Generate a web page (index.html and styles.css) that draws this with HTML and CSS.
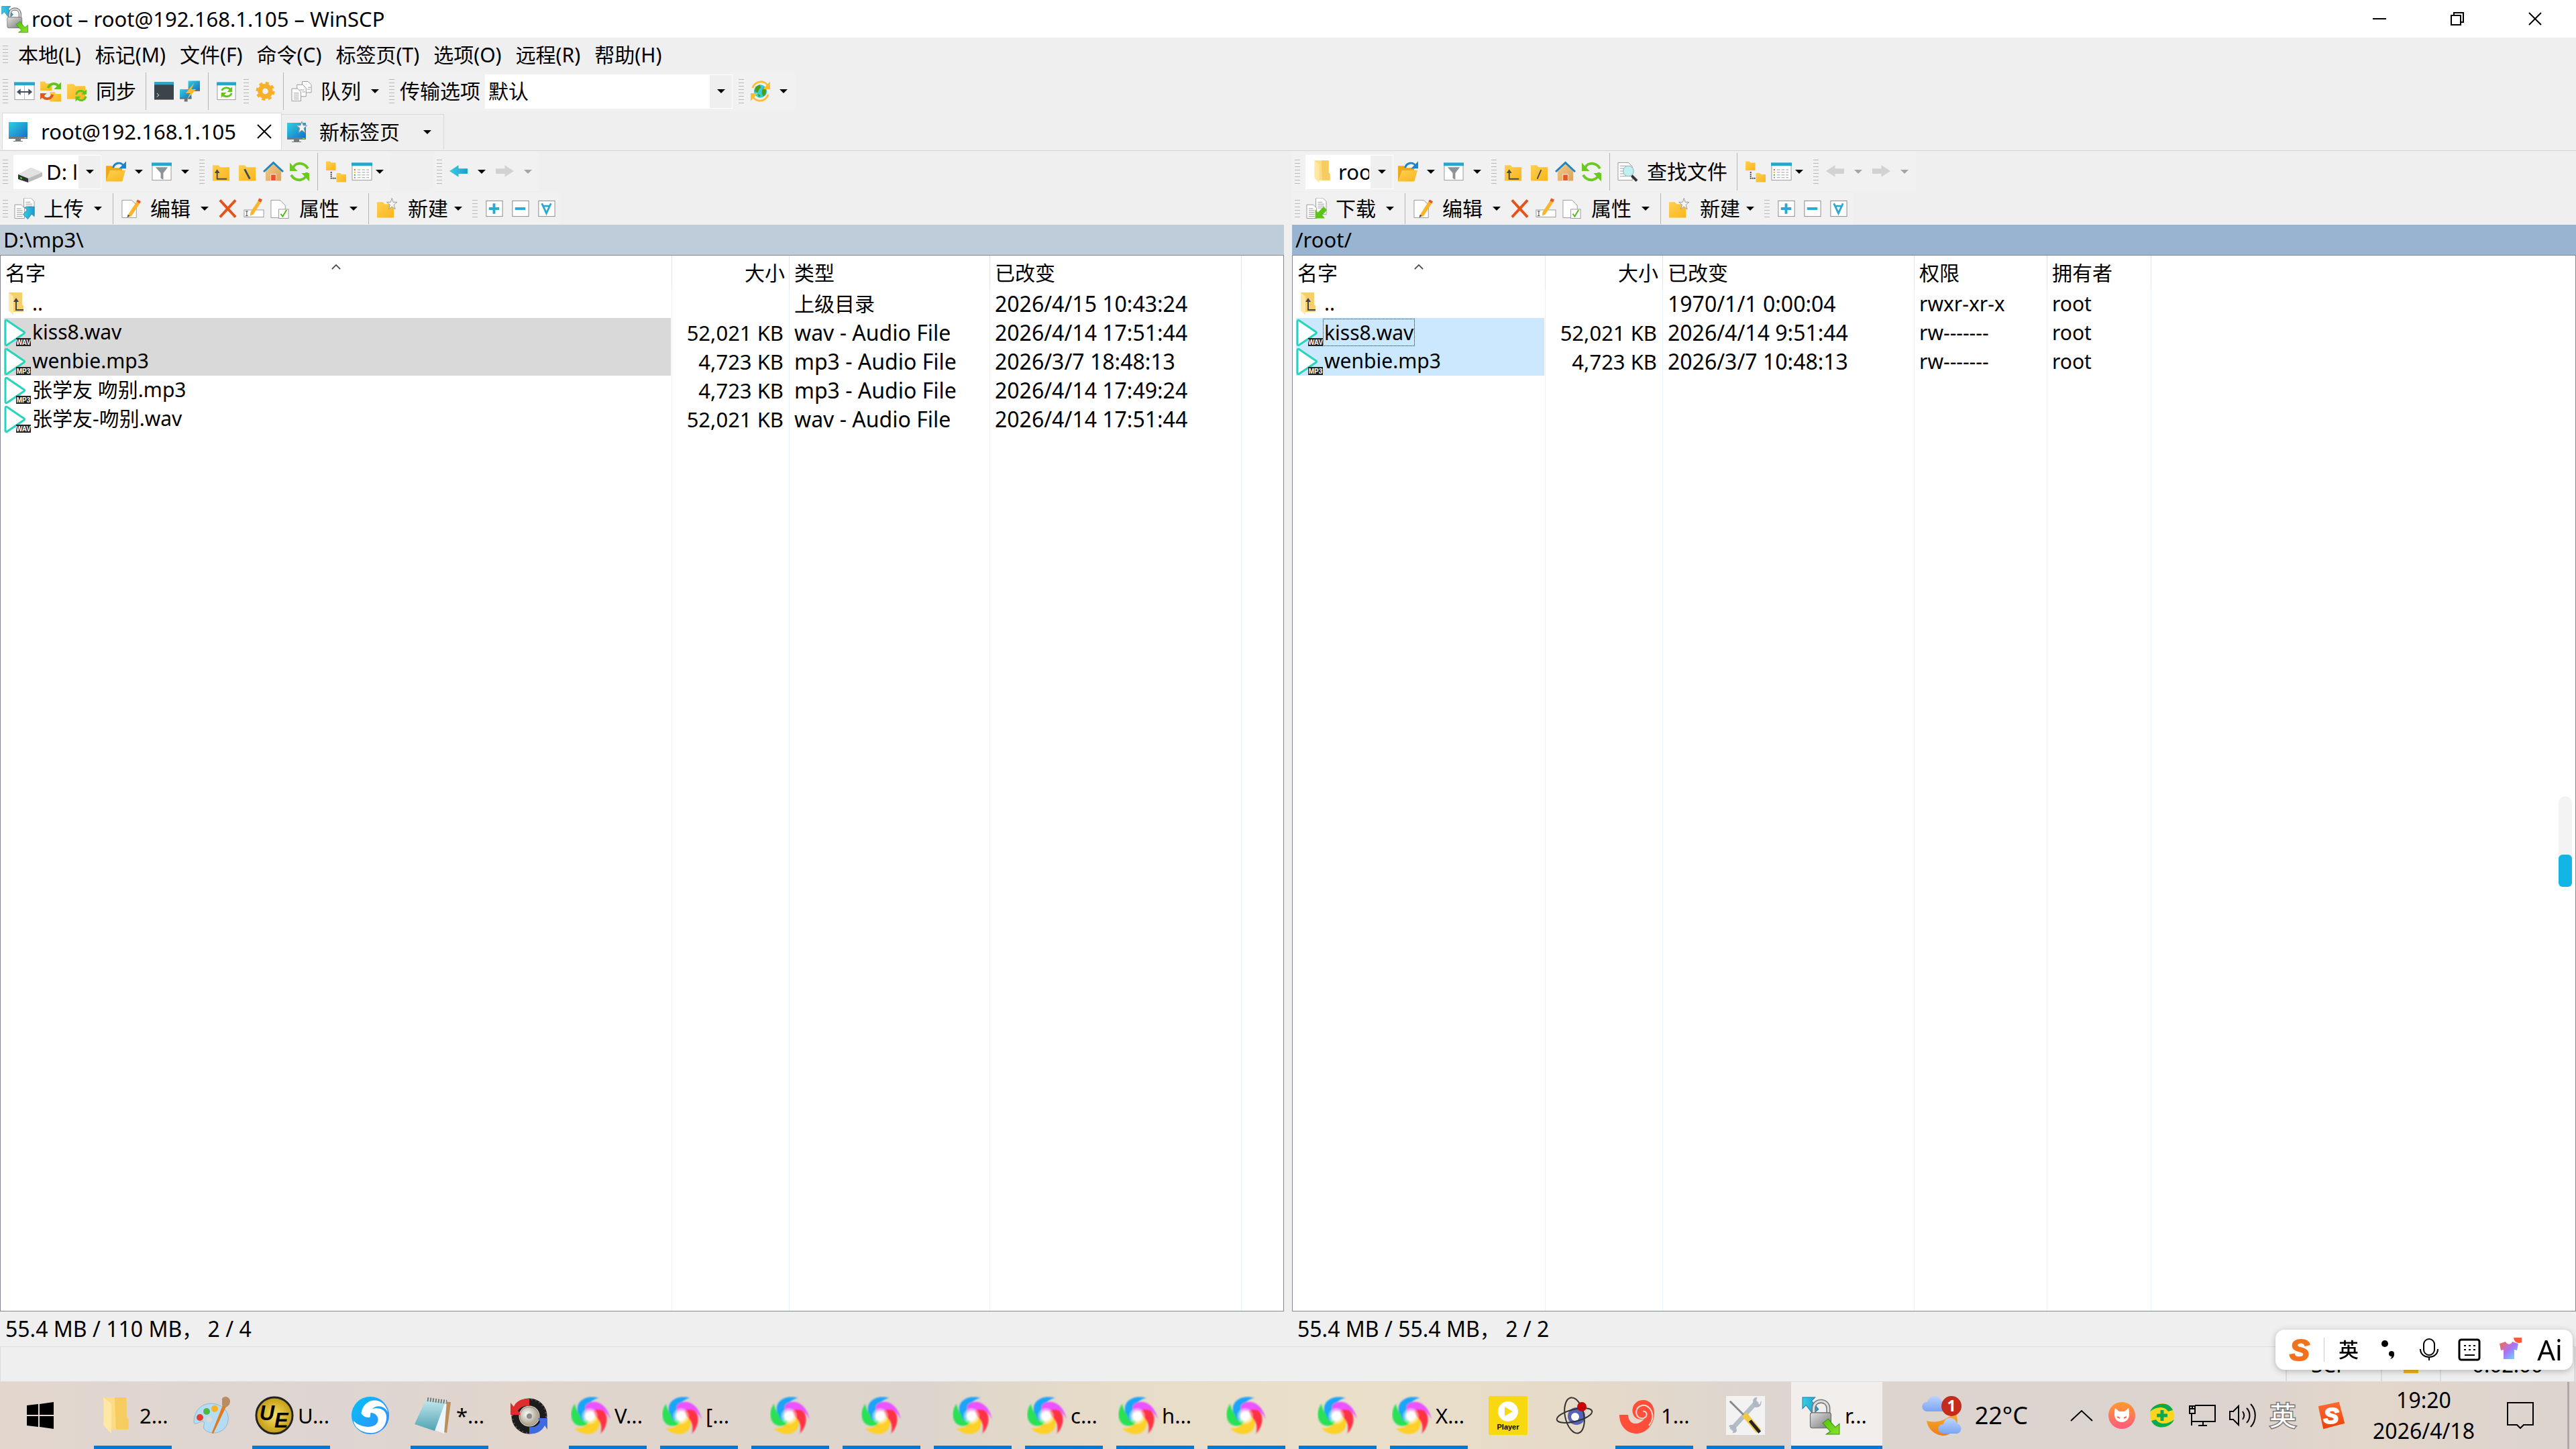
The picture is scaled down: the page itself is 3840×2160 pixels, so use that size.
FILE: index.html
```html
<!DOCTYPE html>
<html lang="zh-CN">
<head>
    <meta charset="UTF-8">
    <meta name="viewport" content="width=device-width, initial-scale=1.0">
    <title>root – root@192.168.1.105 – WinSCP</title>
    <link rel="stylesheet" href="styles.css">
</head>
<body>
    <!-- icon sprite -->
    <svg class="sprite" aria-hidden="true">
        <defs>
            <linearGradient id="gFolder" x1="0" y1="0" x2="1" y2="1"><stop offset="0" stop-color="#ffcf52"/><stop offset="1" stop-color="#f9b61a"/></linearGradient>
            <linearGradient id="gBlue" x1="0" y1="0" x2="1" y2="1"><stop offset="0" stop-color="#2fd0e0"/><stop offset="1" stop-color="#1470c8"/></linearGradient>
            <linearGradient id="gTeal" x1="0" y1="0" x2="1" y2="0"><stop offset="0" stop-color="#36cfe0"/><stop offset="1" stop-color="#219bd0"/></linearGradient>
            <linearGradient id="gGreen" x1="0" y1="0" x2="1" y2="1"><stop offset="0" stop-color="#4fc40c"/><stop offset="1" stop-color="#8be32a"/></linearGradient>
            <linearGradient id="gLock" x1="0" y1="0" x2="1" y2="1"><stop offset="0" stop-color="#e2e2e2"/><stop offset="1" stop-color="#777"/></linearGradient>
            <linearGradient id="gHouse" x1="0" y1="0" x2="1" y2="1"><stop offset="0" stop-color="#f3c98c"/><stop offset="1" stop-color="#d9a45c"/></linearGradient>
            <linearGradient id="gSwirlBlue" x1="0" y1="0" x2="1" y2="1"><stop offset="0" stop-color="#00c3f5"/><stop offset="1" stop-color="#3d86ff"/></linearGradient>
            <linearGradient id="gPad" x1="0" y1="0" x2="0" y2="1"><stop offset="0" stop-color="#c4e8ee"/><stop offset="1" stop-color="#4fa3b4"/></linearGradient>
            <linearGradient id="gCat" x1="0" y1="0" x2="0" y2="1"><stop offset="0" stop-color="#ff9a2b"/><stop offset="1" stop-color="#ff5a80"/></linearGradient>
            <linearGradient id="gShirt" x1="0" y1="0" x2="1" y2="1"><stop offset="0" stop-color="#ff6a3d"/><stop offset="0.5" stop-color="#a575ff"/><stop offset="1" stop-color="#5ff0ff"/></linearGradient>
            <linearGradient id="gMoon" x1="0" y1="0" x2="0" y2="1"><stop offset="0" stop-color="#f5b32c"/><stop offset="1" stop-color="#ee7d18"/></linearGradient>
            <linearGradient id="gCloud" x1="0" y1="0" x2="0" y2="1"><stop offset="0" stop-color="#bdd4ff"/><stop offset="1" stop-color="#7aa4f2"/></linearGradient>
            <linearGradient id="gSogou" x1="0" y1="0" x2="0" y2="1"><stop offset="0" stop-color="#ff6a33"/><stop offset="1" stop-color="#ec4308"/></linearGradient>
            <radialGradient id="gGold"><stop offset="0" stop-color="#f6e163"/><stop offset="1" stop-color="#c39a12"/></radialGradient>
            <radialGradient id="gWhite"><stop offset="0.4" stop-color="#fff"/><stop offset="1" stop-color="#fff" stop-opacity="0"/></radialGradient>
            <radialGradient id="gHub" cx="0.4" cy="0.4"><stop offset="0" stop-color="#fff"/><stop offset="1" stop-color="#b3ab98"/></radialGradient>
            <filter id="soft"><feGaussianBlur stdDeviation="1"/></filter>
        </defs>

        <symbol id="i-winscp" viewBox="0 0 56 56">
            <path d="M1 2h18l-5 5 10 12-8 7L6 13 1 18z" fill="url(#gTeal)" stroke="#1a7fb4" stroke-width="1"/>
            <path d="M17 26v-8c0-14 21-14 21 0v8" fill="none" stroke="#777" stroke-width="6"/>
            <path d="M17 26v-8c0-14 21-14 21 0v8" fill="none" stroke="#ddd" stroke-width="3"/>
            <rect x="12" y="24" width="30" height="22" rx="3" fill="url(#gLock)" stroke="#666"/>
            <path d="M30 39l8-6 10 12 6-5v15H35l6-4z" fill="url(#gGreen)" stroke="#3b8f10"/>
        </symbol>
        <symbol id="i-compare" viewBox="0 0 32 32">
            <rect x="1" y="3" width="30" height="26" fill="#fff" stroke="#999"/><path d="M0 2h32v5H0z" fill="#22a7cf"/>
            <path d="M16 7v22" stroke="#bbb"/><path d="M4 17l6-5v4h12v-4l6 5-6 5v-4H10v4z" fill="#46505a"/>
        </symbol>
        <symbol id="i-sync" viewBox="0 0 32 32">
            <path d="M0 1h7l2 3h9v11H0z" fill="url(#gFolder)"/><path d="M15 17h7l2 3h8v12H15z" fill="url(#gFolder)"/>
            <path d="M12 11c3-8 13-9 17-1" fill="none" stroke="#5fc41b" stroke-width="4"/><path d="M32 2v11H21z" fill="#5fc41b"/>
            <path d="M19 21c-3 8-12 9-16 1" fill="none" stroke="#e2571d" stroke-width="4"/><path d="M0 29V19h10z" fill="#e2571d"/>
        </symbol>
        <symbol id="i-foldersync" viewBox="0 0 32 32">
            <path d="M1 5h10l3 3h15v20H1z" fill="url(#gFolder)"/>
            <path d="M15 21c2-7 10-7 13-2M30 24c-2 7-10 8-14 2" fill="none" stroke="#5fc41b" stroke-width="3"/>
            <path d="M31 13v8h-8zM14 32v-8h8z" fill="#5fc41b"/>
        </symbol>
        <symbol id="i-terminal" viewBox="0 0 32 32"><path d="M1 2h30v27H1z" fill="#3c444b"/><path d="M1 2h30v4H1z" fill="#22a7cf"/><path d="M5 19l3 3-3 3" fill="none" stroke="#fff" stroke-width="1"/></symbol>
        <symbol id="i-putty" viewBox="0 0 32 32">
            <path d="M13 0h18v14H13z" fill="url(#gBlue)"/><path d="M0 13h18v14H0z" fill="url(#gBlue)"/>
            <path d="M13 14h18v2H13zM0 26h18v2H0zM7 28h5v4H7z" fill="#6b757c"/><path d="M22 3L9 19h7l-5 10 14-16h-7z" fill="#fdb92c"/>
        </symbol>
        <symbol id="i-refreshwin" viewBox="0 0 32 32">
            <rect x="2" y="3" width="28" height="26" fill="#fff" stroke="#999"/><path d="M1 2h30v5H1z" fill="#22a7cf"/>
            <path d="M9 15c2-5 10-6 14-1M24 19c-2 6-11 7-15 1" fill="none" stroke="#5fc41b" stroke-width="3"/><path d="M25 9v8h-8zM8 26v-8h8z" fill="#5fc41b"/>
        </symbol>
        <symbol id="i-gear" viewBox="0 0 32 32">
            <circle cx="16" cy="16" r="8" fill="none" stroke="#f7b02c" stroke-width="7"/>
            <circle cx="16" cy="16" r="12" fill="none" stroke="#f7b02c" stroke-width="5" stroke-dasharray="5 4.4"/>
        </symbol>
        <symbol id="i-queue" viewBox="0 0 32 32">
            <g fill="#fff" stroke="#999"><path d="M17 1h9l5 5v12H17z"/><path d="M9 6h9l5 5v13H9z"/><path d="M1 12h9l5 5v14H1z"/><path d="M4 19h8M4 22h8M4 25h8M4 28h8M13 14h7M17 17h5M26 10h4M25 13h4"/></g>
        </symbol>
        <symbol id="i-globe" viewBox="0 0 32 32">
            <circle cx="16" cy="16" r="10" fill="#36cdd9"/><path d="M9 9l6-3 2 4-3 3-2 5-5-2zM20 10l5 4-1 7-4 3-2-6zM12 20l4 2-2 4z" fill="#4b9e1c"/>
            <path d="M4 11C8-1 24-2 28 9M28 21c-4 12-20 13-24 2" fill="none" stroke="#fbbd32" stroke-width="3"/><path d="M31 1v12H20zM1 31V19h11z" fill="#fbbd32"/>
        </symbol>
        <symbol id="i-monitor" viewBox="0 0 32 32"><path d="M2 2h28v23H2z" fill="url(#gBlue)"/><path d="M2 24h28v3H2zM12 27h8v3h-8zM9 30h14v1H9z" fill="#737b80"/><path d="M25 25h3v1h-3z" fill="#7f3"/></symbol>
        <symbol id="i-newtab" viewBox="0 0 32 32"><use href="#i-monitor"/><path d="M24 0l2 6 6 0-5 4 2 7-5-4-5 4 2-7-5-4h6z" fill="#f4f4f4" stroke="#999"/></symbol>
        <symbol id="i-drive" viewBox="0 0 36 32"><path d="M0 20l19-10 17 7v6L15 32 0 27z" fill="#bbb"/><path d="M0 20l19-10 17 7-21 9z" fill="#e2e2e2"/><path d="M0 20l15 6v6L0 27z" fill="#333"/><path d="M3 24l3 1v2l-3-1z" fill="#4e3"/></symbol>
        <symbol id="i-open" viewBox="0 0 32 32">
            <path d="M1 7h9l3 3h13v20H1z" fill="#eda81c"/><path d="M7 14h24l-5 17H1z" fill="url(#gFolder)"/><path d="M12 10c2-8 12-10 16-3" fill="none" stroke="#1b86c7" stroke-width="3"/><path d="M32 0v11H21z" fill="#1b86c7"/>
        </symbol>
        <symbol id="i-filter" viewBox="0 0 32 32"><rect x="1" y="3" width="29" height="26" fill="#fff" stroke="#999"/><path d="M0 2h31v5H0z" fill="#22a7cf"/><path d="M6 9h19l-7 9v10l-4-2v-8z" fill="#8d9499"/></symbol>
        <symbol id="i-up" viewBox="0 0 32 32"><path d="M3 6h9l3 3h14v21H3z" fill="url(#gFolder)"/><path d="M10 15v12h15" fill="none" stroke="#4a4a4a" stroke-width="2"/><path d="M6 18l4-6 4 6z" fill="#4a4a4a"/></symbol>
        <symbol id="i-rootl" viewBox="0 0 32 32"><path d="M3 6h9l3 3h14v21H3z" fill="url(#gFolder)"/><path d="M12 12l8 15" stroke="#4a4a4a" stroke-width="3"/></symbol>
        <symbol id="i-rootr" viewBox="0 0 32 32"><path d="M3 6h9l3 3h14v21H3z" fill="url(#gFolder)"/><path d="M19 13l-6 14" stroke="#4a4a4a" stroke-width="2"/></symbol>
        <symbol id="i-home" viewBox="0 0 32 32"><path d="M16 3l12 12v15H4V15z" fill="url(#gHouse)"/><path d="M12 20h8v10h-8z" fill="#e4572e" stroke="#fff"/><path d="M1 16L16 2l15 14" fill="none" stroke="#1b86c7" stroke-width="3"/></symbol>
        <symbol id="i-refresh" viewBox="0 0 32 32"><path d="M6 14C5 2 22-1 29 11M27 17c0 13-16 16-24 4" fill="none" stroke="#6cc921" stroke-width="4"/><path d="M1 2v13h12zM31 31V18H19z" fill="#6cc921"/></symbol>
        <symbol id="i-tree" viewBox="0 0 32 32"><path d="M1 0h6l2 2h7v12H1z" fill="url(#gFolder)"/><path d="M17 18h6l2 2h7v12H17z" fill="url(#gFolder)"/><path d="M9 16v10h7" fill="none" stroke="#444" stroke-width="2" stroke-dasharray="2 1"/></symbol>
        <symbol id="i-list" viewBox="0 0 32 32"><rect x="1" y="3" width="30" height="26" fill="#fff" stroke="#999"/><path d="M0 2h32v5H0z" fill="#22a7cf"/><path d="M9 13h18M9 17h18M9 21h18M9 25h18" stroke="#999" stroke-dasharray="5 2"/><path d="M4 12h2v2H4z" fill="#e43"/><path d="M4 16h2v2H4z" fill="#fa2"/><path d="M4 20h2v2H4z" fill="#3a3"/><path d="M4 24h2v2H4z" fill="#a6e"/></symbol>
        <symbol id="i-back" viewBox="0 0 32 32"><path d="M2 15L16 6v5h14v8H16v5z" fill="url(#gTeal)"/></symbol>
        <symbol id="i-backoff" viewBox="0 0 32 32"><path d="M2 15L16 6v5h14v8H16v5z" fill="#d2d2d2"/></symbol>
        <symbol id="i-fwd" viewBox="0 0 32 32"><path d="M30 15L16 6v5H2v8h14v5z" fill="#d2d2d2"/></symbol>
        <symbol id="i-docs" viewBox="0 0 32 32"><g fill="#fff" stroke="#999"><path d="M15 0h11l5 5v20H15z"/><path d="M1 10h10l5 5v16H1z"/><path d="M18 6h7M18 9h10M18 12h10M18 15h10M4 16h7M4 19h9M4 22h9M4 25h9M4 28h9"/></g></symbol>
        <symbol id="i-upload" viewBox="0 0 32 32"><use href="#i-docs"/><path d="M14 25l6-7-4-4 15-1v15l-4-4-6 8z" fill="url(#gTeal)" stroke="#1a88c0"/></symbol>
        <symbol id="i-download" viewBox="0 0 32 32"><use href="#i-docs"/><path d="M27 13l5 5-7 8 4 5H14V17l4 5z" fill="#5cc416"/></symbol>
        <symbol id="i-edit" viewBox="0 0 32 32"><path d="M2 3h15l7 7v20H2z" fill="#fff" stroke="#999"/><path d="M25 4l5 3-14 21-5 0 1-4z" fill="#fbb52c"/><path d="M26 2l5 3-2 3-5-3z" fill="#e4572e"/><path d="M11 25l3 2-4 3z" fill="#444"/></symbol>
        <symbol id="i-delete" viewBox="0 0 32 32"><path d="M4 3l24 26M28 3L4 29" stroke="#e3531a" stroke-width="4"/></symbol>
        <symbol id="i-rename" viewBox="0 0 32 32"><rect x="1" y="18" width="30" height="11" fill="#fff" stroke="#999"/><path d="M3 20h4M5 20v7M3 27h4" stroke="#444"/><path d="M23 3l5 2-13 20-5 2 1-6z" fill="#fbb52c"/><path d="M24 0l5 2-2 4-5-2z" fill="#e4572e"/></symbol>
        <symbol id="i-props" viewBox="0 0 32 32"><path d="M2 3h14l8 8v19H2z" fill="#fff" stroke="#999"/><rect x="14" y="17" width="15" height="14" fill="#fff" stroke="#999"/><path d="M17 24l3 4 6-10" fill="none" stroke="#4bb811" stroke-width="2"/></symbol>
        <symbol id="i-newfolder" viewBox="0 0 32 32"><path d="M1 6h9l3 3h14v21H1z" fill="url(#gFolder)"/><path d="M24 0l2 6 6 0-5 4 2 7-5-4-5 4 2-7-5-4h6z" fill="#f4f4f4" stroke="#999"/></symbol>
        <symbol id="i-find" viewBox="0 0 32 32"><path d="M1 2h16l6 6v21H1z" fill="#fff" stroke="#999"/><path d="M4 7h10M4 11h12M4 15h8M4 19h6M4 23h10" stroke="#999"/><circle cx="17" cy="15" r="8" fill="#bff0f4" stroke="#8aa"/><path d="M22 22l8 8" stroke="#333" stroke-width="4"/></symbol>
        <symbol id="i-plus" viewBox="0 0 32 32"><rect x="4" y="4" width="25" height="24" fill="#fff" stroke="#888"/><path d="M16 8v16M8 16h16" stroke="#2aa9d2" stroke-width="4"/></symbol>
        <symbol id="i-minus" viewBox="0 0 32 32"><rect x="4" y="4" width="25" height="24" fill="#fff" stroke="#888"/><path d="M8 16h16" stroke="#2aa9d2" stroke-width="4"/></symbol>
        <symbol id="i-all" viewBox="0 0 32 32"><rect x="4" y="4" width="25" height="24" fill="#fff" stroke="#888"/><path d="M9 8l7 15 7-15M11 12h11" fill="none" stroke="#2aa9d2" stroke-width="3"/></symbol>
        <symbol id="i-folder" viewBox="0 0 40 56"><path d="M2 2h33v28l3 3v15H12z" fill="#fbdc84"/><path d="M18 2h17v28l3 3v15H20z" fill="#f6cb60"/><path d="M2 2l11 9v43L2 42z" fill="#ffe8a4"/></symbol>
        <symbol id="i-parent" viewBox="0 0 40 40"><path d="M7 3h20v18l2 2v9H12z" fill="#f5cf6b"/><path d="M7 3l7 6v28l-7-7z" fill="#ffe8a4"/><path d="M18 14v15h11" fill="none" stroke="#444" stroke-width="2"/><path d="M14 17l4-6 4 6z" fill="#444"/></symbol>
        <symbol id="i-play" viewBox="0 0 40 40"><path d="M2 3c0-2 2-2 3-1l25 17c1 1 1 1 0 2L5 38c-1 1-3 1-3-1z" fill="#fff" stroke="#25d6bd" stroke-width="3"/><path d="M18 28h22v12H18z" fill="#222"/></symbol>

        <symbol id="i-win" viewBox="0 0 40 40"><path d="M0 5l17-2v16H0zM19 3l21-3v19H19zM0 21h17v16L0 35zM19 21h21v19l-21-3z" fill="#000"/></symbol>
        <symbol id="i-paint" viewBox="0 0 58 58">
            <path d="M2 40C2 20 16 8 34 12c20 4 24 24 14 36-10 10-24 8-30 2-4-4 2-10-2-12-4-2-10 6-14 2z" fill="#b5dcf3" stroke="#8bb8d4"/>
            <circle cx="11" cy="32" r="5" fill="#e43b2c"/><circle cx="21" cy="23" r="5" fill="#4db848"/><circle cx="33" cy="19" r="5" fill="#f9b122"/><circle cx="25" cy="35" r="4" fill="#e3d7cf"/>
            <path d="M45 14l5 2-19 40c-2 0-2-1-2-2z" fill="#e07b1f"/><path d="M44 4c4-6 12-2 12 4 0 5-4 8-7 9l-5-3z" fill="#b98d63"/>
        </symbol>
        <symbol id="i-bluebird" viewBox="0 0 60 60"><circle cx="30" cy="30" r="29" fill="url(#gSwirlBlue)"/><path d="M16 27C18 9 36 1 49 11 54 16 56 20 57 25 50 12 34 14 31 24c-1 4-1 6-1 8-2 2-9 2-14-5z" fill="#fff"/><path d="M18 29C28 16 54 14 55 32c0 16-12 26-26 25C14 56 5 47 4 38c10 12 38 14 38-2 0-10-14-14-24-7z" fill="#fff"/></symbol>
        <symbol id="i-notepad" viewBox="0 0 58 58"><path d="M22 6l34 3-6 46-14-4z" fill="#b9905a"/><path d="M20 5l30 3-4 48L30 50z" fill="#eef5f8"/><path d="M19 5l29 3-16 44L2 42z" fill="url(#gPad)"/><path d="M21 5l29 4" stroke="#777" stroke-width="6" stroke-dasharray="2 2"/></symbol>
        <symbol id="i-tire" viewBox="0 0 58 58">
            <circle cx="30" cy="30" r="21" fill="none" stroke="#1c1c1c" stroke-width="11"/><circle cx="30" cy="30" r="25" fill="none" stroke="#555" stroke-width="2" stroke-dasharray="2 4"/>
            <path d="M30 4C18 3 9 9 7 16L2 10v18h16l-5-6c4-6 10-8 17-7z" fill="#df2c2c"/><path d="M30 56c12 1 19-4 23-12l4 6V33H42l4 5c-2 6-8 9-16 8z" fill="#3f6be0"/>
            <circle cx="30" cy="30" r="14" fill="url(#gHub)" stroke="#8d8672"/><circle cx="30" cy="30" r="4" fill="#8b8b8b"/>
        </symbol>
        <symbol id="i-swirl" viewBox="0 0 60 60">
            <g filter="url(#soft)">
                <path d="M17 38C-2 16 16-4 42 3 32 5 22 12 24 34z" fill="#1fa4f8"/>
                <path d="M30 42C2 56-8 30 5 12c2 10 6 20 20 22z" fill="#2be052"/>
                <path d="M42 32C50 60 20 66 5 50c12 0 20-4 26-18z" fill="#fdd02a"/>
                <path d="M32 17c26-2 28 26 13 41 2-10 2-18-10-28z" fill="#ff3345"/>
                <path d="M18 30C14 4 52-2 60 36 52 20 40 14 24 30z" fill="#ea52ff"/>
                <path d="M17 38C8 26 12 12 26 5c-6 10-6 20 0 29z" fill="#1fa4f8"/>
            </g>
            <circle cx="28" cy="31" r="14" fill="url(#gWhite)"/>
        </symbol>
        <symbol id="i-atom" viewBox="0 0 58 58"><circle cx="31" cy="30" r="13" fill="#5662b4"/><circle cx="29" cy="31" r="6" fill="#fff"/><g fill="none" stroke="#333" stroke-width="2"><ellipse cx="28" cy="29" rx="14" ry="27" transform="rotate(-12 28 29)"/><ellipse cx="28" cy="29" rx="27" ry="9" transform="rotate(-14 28 29)"/></g><circle cx="39" cy="16" r="7" fill="#c80505"/></symbol>
        <symbol id="i-spiral" viewBox="0 0 58 58"><path d="M2 28h13c0 14 14 18 24 6-12 4-20-6-17-17C26 5 42 2 50 12c3 4 4 9 4 14 0 16-12 30-26 30S2 46 2 28z" fill="#ff4f3a"/><path d="M46 44c12-14 2-32-10-30-14 3-10 22 2 19 8-3 4-12-1-10" fill="none" stroke="#e6dcd0" stroke-width="2"/></symbol>
        <symbol id="i-tools" viewBox="0 0 60 60"><path d="M0 0h60v60H0z" fill="#f2f2f2"/><path d="M8 52l40-44" stroke="#b4bcc6" stroke-width="7"/><path d="M42 12c-2-8 2-10 6-10l-2 8 6 3 2-6c2 8-4 12-10 10zM4 46c6-4 12 0 12 5 2 4-2 7-6 6l2-6-6-3z" fill="#aeb7c2"/><path d="M6 8l22 22" stroke="#888" stroke-width="3"/><path d="M28 28l22 26" stroke="#f2c744" stroke-width="9"/><path d="M37 38l15 18" stroke="#222" stroke-width="5"/></symbol>
        <symbol id="i-chevron" viewBox="0 0 40 40"><path d="M4 28l16-15 16 15" fill="none" stroke="#000" stroke-width="2"/></symbol>
        <symbol id="i-cat" viewBox="0 0 40 40"><circle cx="20" cy="20" r="20" fill="url(#gCat)"/><path d="M10 9l6 5h8l6-5c2 10 2 20-10 21C8 29 8 19 10 9z" fill="#fff"/><path d="M13 22l4 2M27 22l-4 2" stroke="#ff6a4d" stroke-width="2"/></symbol>
        <symbol id="i-360" viewBox="0 0 40 40"><circle cx="20" cy="20" r="18" fill="#fcd61d"/><path d="M2 14C8 0 30-2 36 12l-7 2C24 6 12 6 2 14zM38 26C32 40 10 42 4 28l7-2c5 8 17 8 27 0z" fill="#0aa84f"/><path d="M20 12v16M12 20h16" stroke="#0aa84f" stroke-width="5"/></symbol>
        <symbol id="i-net" viewBox="0 0 40 40"><g fill="none" stroke="#000" stroke-width="2"><path d="M9 5h30v24H4M21 29v5M14 35h13M4 17v18"/><path d="M1 6h8v11H1z"/><path d="M5 6v5M1 10h8"/></g></symbol>
        <symbol id="i-vol" viewBox="0 0 40 40"><g fill="none" stroke="#000" stroke-width="2"><path d="M1 14h5l8-8v28l-8-8H1z"/><path d="M20 14c3 4 3 8 0 12M26 9c6 6 6 16 0 22M32 3c9 9 9 25 0 34"/></g></symbol>
        <symbol id="i-note" viewBox="0 0 40 40"><path d="M1 1h38v33H25l-5 5-5-5H1z" fill="none" stroke="#000" stroke-width="2"/></symbol>
        <symbol id="i-punct" viewBox="0 0 36 36"><circle cx="12" cy="9" r="5"/><circle cx="22" cy="24" r="4"/><path d="M26 24c0 5-2 7-6 8 2-2 3-4 2-7z"/></symbol>
        <symbol id="i-mic" viewBox="0 0 36 36"><g fill="none" stroke="#000" stroke-width="2"><rect x="10" y="2" width="16" height="24" rx="8"/><path d="M5 17c0 16 26 16 26 0M18 29v5"/></g></symbol>
        <symbol id="i-kbd" viewBox="0 0 36 36"><rect x="3" y="3" width="30" height="30" rx="3" fill="none" stroke="#000" stroke-width="3"/><path d="M10 12h3M17 12h3M24 12h3M10 18h3M17 18h3M24 18h3M11 26h15" stroke="#000" stroke-width="2"/></symbol>
        <symbol id="i-shirt" viewBox="0 0 36 36"><path d="M3 9l9-3c2 5 8 5 10 0l9 3-2 10-4-1v14H9V18l-4 1z" fill="url(#gShirt)"/><circle cx="32" cy="0" r="8" fill="#ff5a36"/></symbol>
    </svg>

    <div class="app">
        <header class="titlebar">
            <svg class="app-icon"><use href="#i-winscp"/></svg>
            <h1 class="lat">root – root@192.168.1.105 – WinSCP</h1>
            <div class="win-buttons">
                <button aria-label="最小化"><svg viewBox="0 0 20 20"><path d="M0 10h20" stroke="#000" stroke-width="2"/></svg></button>
                <button aria-label="还原"><svg viewBox="0 0 20 20"><path d="M1 5h14v14H1zM5 5V1h14v14h-4" fill="none" stroke="#000" stroke-width="2"/></svg></button>
                <button aria-label="关闭"><svg viewBox="0 0 20 20"><path d="M1 1l18 18M19 1L1 19" stroke="#000" stroke-width="2"/></svg></button>
            </div>
        </header>

        <nav class="menubar">
            <span class="grip"></span>
            <button>本地(L)</button><button>标记(M)</button><button>文件(F)</button><button>命令(C)</button><button>标签页(T)</button><button>选项(O)</button><button>远程(R)</button><button>帮助(H)</button>
        </nav>

        <div class="toolbar main-tools">
            <div class="band">
                <span class="grip"></span>
                <button class="tool" aria-label="比较目录"><svg><use href="#i-compare"/></svg></button>
                <button class="tool" aria-label="同步浏览"><svg><use href="#i-sync"/></svg></button>
                <button class="tool"><svg><use href="#i-foldersync"/></svg><span class="label wide">同步</span></button>
                <span class="sep"></span>
                <button class="tool" aria-label="终端"><svg><use href="#i-terminal"/></svg></button>
                <button class="tool" aria-label="PuTTY"><svg><use href="#i-putty"/></svg></button>
                <span class="sep"></span>
                <button class="tool" aria-label="刷新"><svg><use href="#i-refreshwin"/></svg></button>
            </div>
            <div class="band">
                <span class="grip"></span>
                <button class="tool" aria-label="首选项"><svg><use href="#i-gear"/></svg></button>
                <span class="sep"></span>
                <button class="tool"><svg><use href="#i-queue"/></svg><span class="label">队列</span></button>
                <button class="drop after-label" aria-label="队列菜单"></button>
            </div>
            <div class="band">
                <span class="grip"></span>
                <label class="preset-label" for="preset">传输选项</label>
                <div class="combo preset"><select id="preset"><option>默认</option></select><span class="combo-arrow"></span></div>
            </div>
            <div class="band">
                <span class="grip"></span>
                <button class="tool" aria-label="保持更新"><svg><use href="#i-globe"/></svg></button>
                <button class="drop" aria-label="更新菜单"></button>
            </div>
        </div>

        <div class="tabs">
            <button class="tab active lat"><svg><use href="#i-monitor"/></svg><span>root@192.168.1.105</span><svg class="close" viewBox="0 0 22 22"><path d="M1 1l20 20M21 1L1 21" stroke="#000" stroke-width="2"/></svg></button>
            <button class="tab"><svg><use href="#i-newtab"/></svg><span>新标签页</span><span class="tab-arrow"></span></button>
        </div>

        <main class="panes">
            <section class="pane local">
                <div class="toolbar nav-tools">
                    <div class="band">
                        <span class="grip"></span>
                        <div class="combo drive"><svg><use href="#i-drive"/></svg><select class="lat" aria-label="驱动器"><option>D: l</option></select><span class="combo-arrow"></span></div>
                        <button class="tool" aria-label="打开目录"><svg><use href="#i-open"/></svg></button><button class="drop" aria-label="打开菜单"></button>
                        <button class="tool" aria-label="过滤"><svg><use href="#i-filter"/></svg></button><button class="drop" aria-label="过滤菜单"></button>
                    </div>
                    <div class="band">
                        <span class="grip"></span>
                        <button class="tool" aria-label="上级目录"><svg><use href="#i-up"/></svg></button>
                        <button class="tool" aria-label="根目录"><svg><use href="#i-rootl"/></svg></button>
                        <button class="tool" aria-label="主目录"><svg><use href="#i-home"/></svg></button>
                        <button class="tool" aria-label="刷新"><svg><use href="#i-refresh"/></svg></button>
                        <span class="sep"></span>
                        <button class="tool" aria-label="目录树"><svg><use href="#i-tree"/></svg></button>
                        <button class="tool" aria-label="查看样式"><svg><use href="#i-list"/></svg></button><button class="drop tight" aria-label="样式菜单"></button>
                    </div>
                    <div class="band history">
                        <span class="grip"></span>
                        <button class="tool" aria-label="后退"><svg><use href="#i-back"/></svg></button><button class="drop" aria-label="后退菜单"></button>
                        <button class="tool" aria-label="前进" disabled><svg><use href="#i-fwd"/></svg></button><button class="drop" aria-label="前进菜单" disabled></button>
                    </div>
                </div>
                <div class="toolbar file-tools">
                    <div class="band">
                        <span class="grip"></span>
                        <button class="tool"><svg><use href="#i-upload"/></svg><span class="label">上传</span></button><button class="drop after-label" aria-label="上传菜单"></button>
                        <span class="sep"></span>
                        <button class="tool"><svg><use href="#i-edit"/></svg><span class="label">编辑</span></button><button class="drop after-label" aria-label="编辑菜单"></button>
                        <button class="tool" aria-label="删除"><svg><use href="#i-delete"/></svg></button>
                        <button class="tool" aria-label="重命名"><svg><use href="#i-rename"/></svg></button>
                        <button class="tool"><svg><use href="#i-props"/></svg><span class="label">属性</span></button><button class="drop after-label" aria-label="属性菜单"></button>
                        <span class="sep"></span>
                        <button class="tool"><svg><use href="#i-newfolder"/></svg><span class="label new">新建</span></button><button class="drop" aria-label="新建菜单"></button>
                    </div>
                    <div class="band">
                        <span class="grip"></span>
                        <button class="tool" aria-label="选择文件"><svg><use href="#i-plus"/></svg></button>
                        <button class="tool" aria-label="取消选择"><svg><use href="#i-minus"/></svg></button>
                        <button class="tool" aria-label="全选"><svg><use href="#i-all"/></svg></button>
                    </div>
                </div>
                <div class="path lat">D:\mp3\</div>
                <div class="list">
                    <table>
                        <colgroup><col class="c-name"><col class="c-size"><col class="c-type"><col class="c-date"><col></colgroup>
                        <thead>
                            <tr><th>名字<svg class="sort" viewBox="0 0 16 9"><path d="M1 8l7-7 7 7" fill="none" stroke="#444" stroke-width="2"/></svg></th><th class="num">大小</th><th>类型</th><th>已改变</th><th></th></tr>
                        </thead>
                        <tbody>
                            <tr><td class="name"><svg><use href="#i-parent"/></svg><span>..</span></td><td></td><td>上级目录</td><td class="lat">2026/4/15 10:43:24</td><td></td></tr>
                            <tr class="selected"><td class="name"><svg><use href="#i-play"/><text x="29" y="38" class="ext">WAV</text></svg><span>kiss8.wav</span></td><td class="num lat">52,021 KB</td><td class="lat">wav - Audio File</td><td class="lat">2026/4/14 17:51:44</td><td></td></tr>
                            <tr class="selected"><td class="name"><svg><use href="#i-play"/><text x="29" y="38" class="ext">MP3</text></svg><span>wenbie.mp3</span></td><td class="num lat">4,723 KB</td><td class="lat">mp3 - Audio File</td><td class="lat">2026/3/7 18:48:13</td><td></td></tr>
                            <tr><td class="name"><svg><use href="#i-play"/><text x="29" y="38" class="ext">MP3</text></svg><span>张学友 吻别.mp3</span></td><td class="num lat">4,723 KB</td><td class="lat">mp3 - Audio File</td><td class="lat">2026/4/14 17:49:24</td><td></td></tr>
                            <tr><td class="name"><svg><use href="#i-play"/><text x="29" y="38" class="ext">WAV</text></svg><span>张学友-吻别.wav</span></td><td class="num lat">52,021 KB</td><td class="lat">wav - Audio File</td><td class="lat">2026/4/14 17:51:44</td><td></td></tr>
                            <tr class="filler"><td></td><td></td><td></td><td></td><td></td></tr>
                        </tbody>
                    </table>
                </div>
                <div class="summary">55.4 MB / 110 MB<span class="comma">，</span> 2 / 4</div>
            </section>

            <section class="pane remote">
                <div class="toolbar nav-tools">
                    <div class="band">
                        <span class="grip"></span>
                        <div class="combo drive"><svg><use href="#i-folder"/></svg><select class="lat" aria-label="远程目录"><option>root</option></select><span class="combo-arrow"></span></div>
                        <button class="tool" aria-label="打开目录"><svg><use href="#i-open"/></svg></button><button class="drop" aria-label="打开菜单"></button>
                        <button class="tool" aria-label="过滤"><svg><use href="#i-filter"/></svg></button><button class="drop" aria-label="过滤菜单"></button>
                    </div>
                    <div class="band">
                        <span class="grip"></span>
                        <button class="tool" aria-label="上级目录"><svg><use href="#i-up"/></svg></button>
                        <button class="tool" aria-label="根目录"><svg><use href="#i-rootr"/></svg></button>
                        <button class="tool" aria-label="主目录"><svg><use href="#i-home"/></svg></button>
                        <button class="tool" aria-label="刷新"><svg><use href="#i-refresh"/></svg></button>
                        <span class="sep"></span>
                        <button class="tool"><svg><use href="#i-find"/></svg><span class="label wide">查找文件</span></button>
                        <span class="sep"></span>
                        <button class="tool" aria-label="目录树"><svg><use href="#i-tree"/></svg></button>
                        <button class="tool" aria-label="查看样式"><svg><use href="#i-list"/></svg></button><button class="drop tight" aria-label="样式菜单"></button>
                    </div>
                    <div class="band">
                        <span class="grip"></span>
                        <button class="tool" aria-label="后退" disabled><svg><use href="#i-backoff"/></svg></button><button class="drop" aria-label="后退菜单" disabled></button>
                        <button class="tool" aria-label="前进" disabled><svg><use href="#i-fwd"/></svg></button><button class="drop" aria-label="前进菜单" disabled></button>
                    </div>
                </div>
                <div class="toolbar file-tools">
                    <div class="band">
                        <span class="grip"></span>
                        <button class="tool"><svg><use href="#i-download"/></svg><span class="label">下载</span></button><button class="drop after-label" aria-label="下载菜单"></button>
                        <span class="sep"></span>
                        <button class="tool"><svg><use href="#i-edit"/></svg><span class="label">编辑</span></button><button class="drop after-label" aria-label="编辑菜单"></button>
                        <button class="tool" aria-label="删除"><svg><use href="#i-delete"/></svg></button>
                        <button class="tool" aria-label="重命名"><svg><use href="#i-rename"/></svg></button>
                        <button class="tool"><svg><use href="#i-props"/></svg><span class="label">属性</span></button><button class="drop after-label" aria-label="属性菜单"></button>
                        <span class="sep"></span>
                        <button class="tool"><svg><use href="#i-newfolder"/></svg><span class="label new">新建</span></button><button class="drop" aria-label="新建菜单"></button>
                    </div>
                    <div class="band">
                        <span class="grip"></span>
                        <button class="tool" aria-label="选择文件"><svg><use href="#i-plus"/></svg></button>
                        <button class="tool" aria-label="取消选择"><svg><use href="#i-minus"/></svg></button>
                        <button class="tool" aria-label="全选"><svg><use href="#i-all"/></svg></button>
                    </div>
                </div>
                <div class="path lat">/root/</div>
                <div class="list">
                    <table>
                        <colgroup><col class="c-rname"><col class="c-size"><col class="c-date"><col class="c-perm"><col class="c-owner"><col></colgroup>
                        <thead>
                            <tr><th>名字<svg class="sort" viewBox="0 0 16 9"><path d="M1 8l7-7 7 7" fill="none" stroke="#444" stroke-width="2"/></svg></th><th class="num">大小</th><th>已改变</th><th>权限</th><th>拥有者</th><th></th></tr>
                        </thead>
                        <tbody>
                            <tr><td class="name"><svg><use href="#i-parent"/></svg><span>..</span></td><td></td><td class="lat">1970/1/1 0:00:04</td><td>rwxr-xr-x</td><td>root</td><td></td></tr>
                            <tr class="selected"><td class="name"><svg><use href="#i-play"/><text x="29" y="38" class="ext">WAV</text></svg><span class="focused">kiss8.wav</span></td><td class="num lat">52,021 KB</td><td class="lat">2026/4/14 9:51:44</td><td>rw-------</td><td>root</td><td></td></tr>
                            <tr class="selected"><td class="name"><svg><use href="#i-play"/><text x="29" y="38" class="ext">MP3</text></svg><span>wenbie.mp3</span></td><td class="num lat">4,723 KB</td><td class="lat">2026/3/7 10:48:13</td><td>rw-------</td><td>root</td><td></td></tr>
                            <tr class="filler"><td></td><td></td><td></td><td></td><td></td><td></td></tr>
                        </tbody>
                    </table>
                </div>
                <div class="summary">55.4 MB / 55.4 MB<span class="comma">，</span> 2 / 2</div>
            </section>
        </main>

        <footer class="statusbar lat">
            <span class="cell grow"></span>
            <span class="cell proto">SCP</span>
            <span class="cell lock"><svg viewBox="0 0 22 30"><path d="M5 14V8c0-8 12-8 12 0v6" fill="none" stroke="#999" stroke-width="3"/><path d="M0 12h22v16H0z" fill="#efb41e"/></svg></span>
            <span class="cell time">0:02:00</span>
        </footer>

        <div class="taskbar lat">
            <button class="start" aria-label="开始"><svg><use href="#i-win"/></svg></button>
            <button class="task open named"><svg><use href="#i-folder"/></svg><span>2...</span></button>
            <button class="task" aria-label="画图"><svg><use href="#i-paint"/></svg></button>
            <button class="task open named"><svg viewBox="0 0 60 60"><circle cx="30" cy="30" r="28" fill="url(#gGold)" stroke="#222" stroke-width="3"/><text x="7" y="37" class="ue">U</text><text x="30" y="49" class="ue">E</text></svg><span>U...</span></button>
            <button class="task" aria-label="浏览器"><svg><use href="#i-bluebird"/></svg></button>
            <button class="task open named"><svg><use href="#i-notepad"/></svg><span>*...</span></button>
            <button class="task" aria-label="同步"><svg><use href="#i-tire"/></svg></button>
            <button class="task open named"><svg><use href="#i-swirl"/></svg><span>V...</span></button>
            <button class="task open named"><svg><use href="#i-swirl"/></svg><span>[...</span></button>
            <button class="task open" aria-label="窗口"><svg><use href="#i-swirl"/></svg></button>
            <button class="task open" aria-label="窗口"><svg><use href="#i-swirl"/></svg></button>
            <button class="task open" aria-label="窗口"><svg><use href="#i-swirl"/></svg></button>
            <button class="task open named"><svg><use href="#i-swirl"/></svg><span>c...</span></button>
            <button class="task open named"><svg><use href="#i-swirl"/></svg><span>h...</span></button>
            <button class="task open" aria-label="窗口"><svg><use href="#i-swirl"/></svg></button>
            <button class="task open" aria-label="窗口"><svg><use href="#i-swirl"/></svg></button>
            <button class="task open named"><svg><use href="#i-swirl"/></svg><span>X...</span></button>
            <button class="task"><svg viewBox="0 0 58 58"><rect width="58" height="58" rx="2" fill="#f8d90f"/><circle cx="29" cy="23" r="15" fill="#fff"/><path d="M24 16l12 7-12 7z" fill="#f8d90f"/><text x="29" y="50" class="player">Player</text></svg></button>
            <button class="task" aria-label="Atom"><svg><use href="#i-atom"/></svg></button>
            <button class="task open named"><svg><use href="#i-spiral"/></svg><span>1...</span></button>
            <button class="task open" aria-label="工具"><svg><use href="#i-tools"/></svg></button>
            <button class="task open named current"><svg><use href="#i-winscp"/></svg><span>r...</span></button>
            <div class="tray">
                <button class="weather"><svg viewBox="0 0 60 60"><path d="M8 38c14 4 30 0 42-14 8 12 4 34-16 36C20 60 10 50 8 38z" fill="url(#gMoon)"/><path d="M8 24c-10-2-8-15 1-14C12-2 28-2 30 9c12 0 12 15 2 15z" fill="url(#gCloud)"/><path d="M32 57c-10-2-8-14 1-14 2-12 18-12 20-1 9 2 8 14 0 15z" fill="url(#gCloud)"/><circle cx="45" cy="16" r="15" fill="#c42b1c"/><text x="45" y="24" class="badge-num">1</text></svg><span>22°C</span></button>
                <button class="tray-icon" aria-label="显示隐藏的图标"><svg><use href="#i-chevron"/></svg></button>
                <button class="tray-icon" aria-label="猫"><svg><use href="#i-cat"/></svg></button>
                <button class="tray-icon" aria-label="360"><svg><use href="#i-360"/></svg></button>
                <button class="tray-icon" aria-label="网络"><svg><use href="#i-net"/></svg></button>
                <button class="tray-icon" aria-label="音量"><svg><use href="#i-vol"/></svg></button>
                <button class="tray-icon lang">英</button>
                <button class="tray-icon sogou"><svg viewBox="0 0 40 40"><path d="M2 7L31 1l8 30-30 8z" fill="url(#gSogou)" stroke="url(#gSogou)" stroke-width="2"/><text x="20" y="32" class="s-mark s-white">S</text></svg></button>
                <button class="clock"><span>19:20</span><span>2026/4/18</span></button>
                <button class="notice" aria-label="通知"><svg><use href="#i-note"/></svg></button>
                <span class="desktop-edge"></span>
            </div>
        </div>
    </div>

    <div class="side-meter"><span></span></div>

    <div class="ime">
        <svg viewBox="0 0 40 40"><text x="20" y="36" class="s-mark s-orange">S</text></svg>
        <span class="ime-sep"></span>
        <button class="ime-lang">英</button>
        <button aria-label="标点"><svg><use href="#i-punct"/></svg></button>
        <button aria-label="语音"><svg><use href="#i-mic"/></svg></button>
        <button aria-label="键盘"><svg><use href="#i-kbd"/></svg></button>
        <button aria-label="皮肤"><svg><use href="#i-shirt"/></svg></button>
        <button class="ime-ai">Ai</button>
    </div>
</body>
</html>
```

FILE: styles.css
```css
* {
    box-sizing: border-box;
}
body {
    margin: 0;
    font-family: "Noto Sans", "Noto Sans CJK SC", sans-serif;
    font-size: 30px;
    line-height: 40px;
    color: #000;
    background: #efefef;
}
button, select {
    font: inherit;
    color: inherit;
    background: none;
    border: none;
    padding: 0;
    margin: 0;
}
svg {
    display: block;
    flex: none;
    overflow: visible;
}
.sprite {
    position: absolute;
    width: 0;
    height: 0;
}
/* latin-only text runs a size larger than the chinese labels */
.lat {
    font-size: 31px;
}
td.lat, .summary {
    font-size: 32px;
}
td.num {
    font-size: 31px;
}
.app {
    display: flex;
    flex-direction: column;
    height: 100vh;
}

/* title and menu */
.titlebar {
    display: flex;
    align-items: center;
    height: 56px;
    padding-left: 2px;
    background: #fff;
}
.app-icon {
    width: 41px;
    height: 41px;
}
.titlebar h1 {
    margin: 0 0 0 4px;
    font-weight: normal;
}
.win-buttons {
    display: flex;
    margin-left: auto;
    padding-right: 3px;
}
.win-buttons button {
    display: flex;
    align-items: center;
    justify-content: center;
    width: 116px;
    height: 54px;
}
.win-buttons svg {
    width: 20px;
    height: 20px;
}
.menubar {
    display: flex;
    align-items: center;
    gap: 1px;
    height: 51px;
    padding-left: 4px;
}
.menubar .grip {
    margin-right: 4px;
}
.menubar button {
    padding: 0 10px;
}
.grip {
    flex: none;
    width: 8px;
    height: 27px;
    margin-right: 5px;
    background: repeating-linear-gradient(#b9b9b9 0 1px, transparent 1px 5px);
}

/* toolbars */
.toolbar {
    display: flex;
}
.main-tools {
    height: 58px;
}
.nav-tools {
    height: 58px;
    margin-top: 2px;
}
.file-tools {
    height: 48px;
    margin-top: 2px;
}
.band {
    display: flex;
    align-items: center;
    padding: 0 2px 0 4px;
    background: #f1f1f1;
    border-radius: 4px;
}
.main-tools .grip, .nav-tools .grip {
    height: 37px;
}
.tool {
    display: flex;
    align-items: center;
}
.tool svg {
    width: 31px;
    height: 32px;
    margin: 0 4px;
}
.label {
    margin-left: 9px;
}
.label.wide {
    margin-right: 7px;
}
.label.new {
    margin-left: 12px;
}
.sep {
    width: 1px;
    align-self: stretch;
    margin: 1px 7px;
    background: #b5b5b5;
}
.drop {
    width: 12px;
    height: 40px;
    margin: 0 9px;
}
.drop::before, .combo-arrow::before, .tab-arrow::before {
    content: "";
    display: block;
    border: 6px solid transparent;
    border-top-color: #000;
    border-bottom: none;
}
.drop:disabled::before {
    border-top-color: #a5a5a5;
}
.drop.after-label {
    margin-left: 15px;
}
.drop.tight {
    margin-left: 1px;
}
.preset-label {
    margin: 0 7px 0 3px;
}
.combo {
    display: flex;
    align-items: center;
    height: 51px;
    border: 1px solid #fff;
    background: #fff;
}
.combo select {
    flex: 1;
    min-width: 0;
    height: 49px;
    appearance: none;
}
.combo-arrow {
    display: flex;
    align-items: center;
    justify-content: center;
    align-self: stretch;
    width: 33px;
    background: #efefef;
}
.preset {
    width: 369px;
    margin-right: 3px;
    padding-left: 4px;
}
.drive {
    width: 131px;
    margin: 0 2px 0 3px;
}
.drive svg {
    width: 36px;
    height: 36px;
    margin: 0 6px;
}
.drive select {
    padding-right: 2px;
    overflow: hidden;
}
.history {
    margin-left: 64px;
}

/* session tabs */
.tabs {
    display: flex;
    align-items: flex-end;
    height: 60px;
    padding: 4px 3px 1px;
    border-bottom: 1px solid #d4d4d4;
}
.tab {
    display: flex;
    align-items: center;
    height: 53px;
    border: 1px solid #d9d9d9;
    border-width: 1px 1px 0 0;
}
.tab.active {
    height: 55px;
    border-left-width: 1px;
    background: #fff;
}
.tab svg {
    width: 32px;
    height: 32px;
    margin: 0 18px 0 6px;
}
.tab.active svg {
    margin-left: 7px;
}
.tab.active .close {
    width: 22px;
    height: 22px;
    margin: 0 14px 0 31px;
}
.tab-arrow {
    margin: 0 18px 0 35px;
}

/* file panels */
.panes {
    display: grid;
    grid-template-columns: 1914fr 1914fr;
    column-gap: 12px;
    flex: 1;
    min-height: 0;
}
.pane {
    display: flex;
    flex-direction: column;
    min-width: 0;
}
.path {
    height: 45px;
    padding-left: 5px;
    line-height: 45px;
    background: #bfcddb;
}
.remote .path {
    background: #99b4d1;
}
.list {
    flex: 1;
    min-height: 0;
    border: 1px solid #828790;
    background: #fff;
}
table {
    width: 100%;
    height: 100%;
    table-layout: fixed;
    border-collapse: separate;
    border-spacing: 0;
}
.c-name { width: 1001px; }
.c-rname { width: 377px; }
.c-size { width: 175px; }
.c-type { width: 299px; }
.c-date { width: 375px; }
.c-perm { width: 198px; }
.c-owner { width: 155px; }
th {
    position: relative;
    height: 50px;
    padding: 2px 6px 0 7px;
    font-weight: normal;
    text-align: left;
    border-right: 1px solid #e5e5e5;
}
td {
    height: 43px;
    padding: 0 8px 0 7px;
    white-space: nowrap;
    border-right: 1px solid #e7f2fb;
}
th:last-child, td:last-child {
    border-right: none;
}
.sort {
    position: absolute;
    top: 13px;
    left: 50%;
    width: 14px;
    height: 8px;
    margin-left: -7px;
}
.num {
    text-align: right;
}
td.name {
    padding: 0 1px 0 5px;
    line-height: 0;
    background-clip: content-box;
}
td.name svg, td.name span {
    display: inline-block;
    vertical-align: middle;
}
td.name svg {
    width: 40px;
    height: 40px;
}
td.name span {
    height: 43px;
    line-height: 42px;
    padding: 0 2px;
}
td.name .focused {
    height: 41px;
    line-height: 39px;
    padding: 0 1px;
    border: 1px dotted #222;
}
.local .selected .name {
    background-color: #d9d9d9;
}
.remote .selected .name {
    background-color: #cce8ff;
}
tr.filler td {
    height: auto;
}
.ext {
    font: bold 10px "Liberation Sans", sans-serif;
    fill: #fff;
    text-anchor: middle;
}
.summary {
    height: 52px;
    padding-left: 8px;
    line-height: 50px;
}
.comma {
    font-family: "Noto Sans CJK SC", sans-serif;
    font-size: 30px;
}
.statusbar {
    display: flex;
    height: 53px;
    border: 1px solid #dcdcdc;
    line-height: 50px;
}
.cell {
    display: flex;
    align-items: center;
    justify-content: center;
    border-right: 2px solid #dcdcdc;
}
.grow { flex: 1; }
.proto { width: 142px; padding-right: 12px; }
.lock { width: 88px; }
.lock svg { width: 22px; height: 30px; }
.time { width: 200px; }

/* taskbar */
.taskbar {
    display: flex;
    height: 100px;
    background: linear-gradient(90deg, #e2d6cd 0, #ded5d2 13%, #e1d5cc 20%, #ddd5cd 36%, #e6dbc8 42%, #eae0ca 52%, #e6dac8 61%, #ddd5cf 68%, #dcd3cf 86%, #e3d6ca 92%, #dcd4cf 100%);
}
.start {
    width: 130px;
    padding-left: 40px;
}
.start svg {
    width: 40px;
    height: 40px;
}
.task {
    display: flex;
    align-items: center;
    justify-content: center;
    width: 100px;
    border-bottom: 5px solid transparent;
    padding-top: 5px;
}
.task svg {
    width: 60px;
    height: 58px;
}
.task.open {
    width: 116px;
    margin: 0 10px;
    border-bottom-color: #0078d7;
}
.task.named {
    justify-content: flex-start;
}
.task.named svg {
    margin: 0 5px 0 3px;
}
.task.current {
    width: 136px;
    margin: 0;
    padding-left: 12px;
    background: #f2eeeb;
}
.tray {
    display: flex;
    align-items: center;
    margin-left: auto;
}
.weather {
    display: flex;
    align-items: center;
    margin-right: 50px;
    font-size: 36px;
}
.weather svg {
    width: 60px;
    height: 60px;
    margin-right: 20px;
}
.tray-icon {
    width: 60px;
    height: 60px;
}
.tray-icon svg, .notice svg {
    width: 40px;
    height: 40px;
    margin: auto;
}
.lang {
    color: #fff;
    font-size: 40px;
    -webkit-text-stroke: 3px #777;
    paint-order: stroke fill;
}
.sogou {
    margin-left: 12px;
}
.clock {
    display: flex;
    flex-direction: column;
    align-items: center;
    width: 172px;
    margin-left: 22px;
    font-size: 32px;
    line-height: 46px;
}
.notice {
    width: 60px;
    margin: 0 40px 0 28px;
}
.desktop-edge {
    align-self: stretch;
    width: 3px;
    margin-right: 10px;
    background: #b0aaa6;
}

/* floating pieces */
.ime {
    position: fixed;
    right: 5px;
    bottom: 118px;
    display: flex;
    align-items: center;
    height: 60px;
    width: 443px;
    padding: 0 4px 0 16px;
    border-radius: 14px;
    background: #fff;
    box-shadow: 0 2px 10px rgba(0, 0, 0, 0.25);
}
.ime > svg {
    width: 40px;
    height: 40px;
}
.ime-sep {
    width: 1px;
    height: 36px;
    margin: 0 6px 0 16px;
    background: #ccc;
}
.ime button {
    flex: 1;
}
.ime button svg {
    width: 36px;
    height: 36px;
    margin: auto;
}
.ime-lang {
    font-weight: 500;
}
.ime .ime-ai {
    font-size: 42px;
}
.side-meter {
    position: fixed;
    top: 1187px;
    right: 6px;
    display: flex;
    align-items: flex-end;
    width: 20px;
    height: 135px;
    border-radius: 10px;
    background: #f3f3f3;
}
.side-meter span {
    width: 100%;
    height: 48px;
    border-radius: 6px;
    background: #12b5e5;
}

/* lettering inside the logos */
.ue {
    font: italic bold 32px "Liberation Sans", sans-serif;
}
.player {
    font: bold 11px "Liberation Sans", sans-serif;
    text-anchor: middle;
}
.badge-num {
    font-size: 23px;
    font-weight: bold;
    fill: #fff;
    text-anchor: middle;
}
.s-mark {
    font: italic bold 34px "Liberation Sans", sans-serif;
    text-anchor: middle;
    stroke-width: 2px;
}
.s-white {
    fill: #fff;
    stroke: #fff;
}
.s-orange {
    font-size: 45px;
    fill: #f2711c;
    stroke: #f2711c;
}
```
